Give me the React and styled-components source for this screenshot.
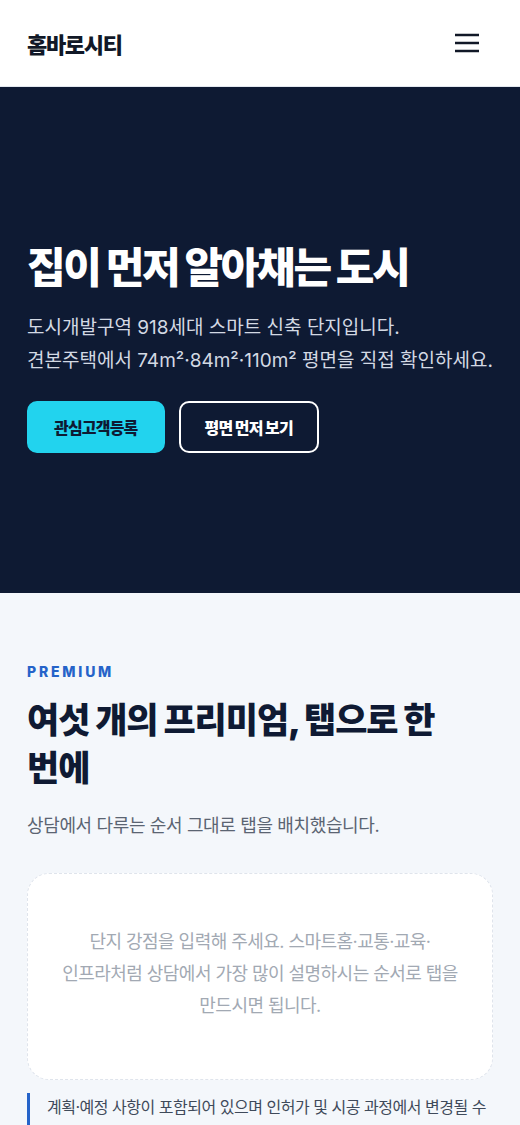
import React from 'react';
import styled, { createGlobalStyle } from 'styled-components';

const GlobalStyle = createGlobalStyle`
  * { box-sizing: border-box; }
  body {
    margin: 0;
    background: #f4f7fb;
    font-family: Inter, "Noto Sans CJK KR", sans-serif;
    color: #0f1a33;
  }
`;

const Header = styled.header`
  height: 87px;
  display: flex;
  align-items: center;
  justify-content: space-between;
  padding: 0 33px 0 27px;
  background: #fff;
  border-bottom: 1px solid #e3e8ef;
`;

const Logo = styled.div`
  font-size: 22px;
  font-weight: 900;
  letter-spacing: -0.06em;
  color: #111827;
`;

const MenuButton = styled.button`
  width: 40px;
  height: 40px;
  display: flex;
  align-items: center;
  justify-content: center;
  padding: 0;
  background: none;
  border: none;
  color: #111827;
  cursor: pointer;
`;

const Hero = styled.section`
  background: #0e1a33;
  padding: 156px 27px 140px;
  color: #fff;
`;

const HeroTitle = styled.h1`
  margin: 0 0 18px;
  font-size: 42px;
  font-weight: 900;
  letter-spacing: -0.055em;
  line-height: 1.2;
`;

const HeroText = styled.p`
  margin: 0;
  font-size: 19px;
  line-height: 33px;
  letter-spacing: 0;
  color: #d3d9e3;
`;

const Buttons = styled.div`
  display: flex;
  gap: 14px;
  margin-top: 24px;
`;

const Button = styled.button`
  height: 52px;
  padding: 0 ${(p) => (p.$primary ? '25px' : '24px')};
  border-radius: 10px;
  font-family: inherit;
  font-size: 16px;
  font-weight: 900;
  letter-spacing: -0.05em;
  cursor: pointer;
  background: ${(p) => (p.$primary ? '#22d3ee' : 'transparent')};
  color: ${(p) => (p.$primary ? '#0e1a33' : '#fff')};
  border: 2px solid ${(p) => (p.$primary ? '#22d3ee' : '#fff')};
`;

const Section = styled.section`
  padding: 70px 27px 40px;
  background: #f4f7fb;
`;

const Eyebrow = styled.div`
  font-size: 14px;
  font-weight: 800;
  letter-spacing: 0.2em;
  color: #2563c9;
`;

const SectionTitle = styled.h2`
  margin: 16px 0 0;
  max-width: 440px;
  font-size: 35px;
  font-weight: 900;
  line-height: 48px;
  letter-spacing: -0.03em;
  color: #0f1a33;
`;

const SectionText = styled.p`
  margin: 19px 0 0;
  font-size: 18px;
  letter-spacing: -0.02em;
  color: #5b6472;
`;

const EmptyCard = styled.div`
  margin-top: 36px;
  padding: 52px 28px 57px;
  background: #fff;
  border: 1.5px dashed #dfe4ec;
  border-radius: 22px;
  text-align: center;
  font-size: 18px;
  line-height: 32px;
  letter-spacing: -0.03em;
  color: #a2a9b3;
`;

const Notice = styled.p`
  margin: 13px 0 0;
  padding-left: 17px;
  border-left: 3px solid #2563c9;
  font-size: 16px;
  line-height: 28px;
  letter-spacing: -0.03em;
  color: #3f4a5a;
`;

const MenuIcon = () => (
  <svg width="24" height="20" viewBox="0 0 24 20" fill="none" stroke="currentColor" strokeWidth="2.5">
    <line x1="0" y1="2" x2="24" y2="2" />
    <line x1="0" y1="10" x2="24" y2="10" />
    <line x1="0" y1="18" x2="24" y2="18" />
  </svg>
);

export default function App() {
  return (
    <>
      <GlobalStyle />
      <Header>
        <Logo>홈바로시티</Logo>
        <MenuButton aria-label="메뉴">
          <MenuIcon />
        </MenuButton>
      </Header>
      <Hero>
        <HeroTitle>집이 먼저 알아채는 도시</HeroTitle>
        <HeroText>도시개발구역 918세대 스마트 신축 단지입니다.</HeroText>
        <HeroText>견본주택에서 74m²·84m²·110m² 평면을 직접 확인하세요.</HeroText>
        <Buttons>
          <Button $primary>관심고객등록</Button>
          <Button>평면 먼저 보기</Button>
        </Buttons>
      </Hero>
      <Section>
        <Eyebrow>PREMIUM</Eyebrow>
        <SectionTitle>여섯 개의 프리미엄, 탭으로 한 번에</SectionTitle>
        <SectionText>상담에서 다루는 순서 그대로 탭을 배치했습니다.</SectionText>
        <EmptyCard>
          단지 강점을 입력해 주세요. 스마트홈·교통·교육·
          <br />
          인프라처럼 상담에서 가장 많이 설명하시는 순서로 탭을
          <br />
          만드시면 됩니다.
        </EmptyCard>
        <Notice>
          계획·예정 사항이 포함되어 있으며 인허가 및 시공 과정에서 변경될 수 있습니다. 세부 내용은 입주자 모집공고를 확인해 주세요.
        </Notice>
      </Section>
    </>
  );
}
